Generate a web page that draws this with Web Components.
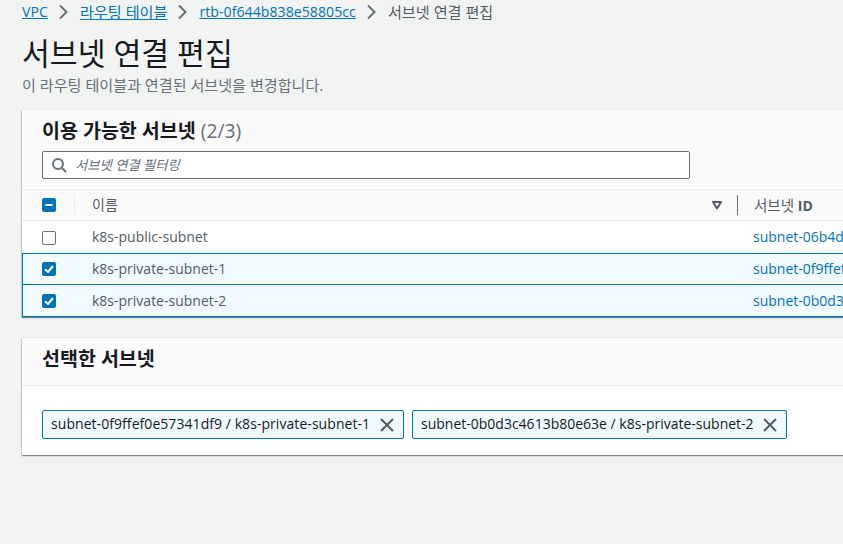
<!DOCTYPE html>
<html lang="ko"><head><meta charset="utf-8">
<style>
html,body{margin:0;padding:0;height:544px;width:843px;overflow:hidden;background:#f2f3f3;font-family:"Open Sans","Noto Sans CJK KR",sans-serif;font-size:14px;color:#16191f}
</style></head><body>
<edit-page></edit-page>
<script>
function def(name,css,html){
  customElements.define(name,class extends HTMLElement{
    constructor(){super();const r=this.attachShadow({mode:'open'});r.innerHTML=`<style>${css}</style>`+(typeof html==='function'?html(this):html);}
  });
}
const chev='<svg width="16" height="16" viewBox="0 0 16 16" fill="none" stroke="#687078" stroke-width="2"><path d="M4 1.5 10.5 8 4 14.5"/></svg>';
def('bread-crumbs',`:host{display:flex;align-items:center;height:23px;padding-left:22px;white-space:nowrap;font-size:14.2px;line-height:22px;color:#545b64}
a{color:#0073bb;text-decoration:underline}svg{margin:0 8px;display:block}.k{font-size:15.15px}`,
`<a>VPC</a>${chev}<a class="k">라우팅 테이블</a>${chev}<a>rtb-0f644b838e58805cc</a>${chev}<span class="k">서브넷 연결 편집</span>`);
def('page-head',`:host{display:block;padding:13px 22px 0 22px;height:87px;box-sizing:border-box}
h1{margin:0;font-size:30.3px;line-height:36px;font-weight:400;color:#16191f}
p{margin:4px 0 0;font-size:15.1px;line-height:18px;color:#687078}`,
`<h1>서브넷 연결 편집</h1><p>이 라우팅 테이블과 연결된 서브넷을 변경합니다.</p>`);
def('aws-card',`:host{display:block;background:#fff;width:1100px;margin-left:22px;box-shadow:0 1px 1px 0 rgba(0,28,36,.3),1px 1px 1px 0 rgba(0,28,36,.15),-1px 1px 1px 0 rgba(0,28,36,.15),0 -1px 1px 0 rgba(0,28,36,.04)}`,`<slot></slot>`);
def('check-box',`:host{display:block;width:14px;height:14px;box-sizing:border-box;border-radius:2px;border:1px solid #687078;background:#fff}
:host([on]),:host([mixed]){background:#0073bb;border-color:#0073bb}
svg{display:block;width:12px;height:12px}`,
el=>el.hasAttribute('on')?'<svg viewBox="0 0 12 12" fill="none" stroke="#fff" stroke-width="2"><path d="M2 6.2 5 9 10 3"/></svg>':el.hasAttribute('mixed')?'<svg viewBox="0 0 12 12" fill="none" stroke="#fff" stroke-width="2"><path d="M2.5 6h7"/></svg>':'');
def('search-box',`:host{display:flex;align-items:center;box-sizing:border-box;width:648px;height:28px;border:1px solid #687078;border-radius:2px;background:#fff;margin-top:6px;padding-left:8px;font-size:13.3px;font-style:italic;color:#687078}
svg{margin-right:8px;display:block}span{padding-bottom:2px}`,
`<svg width="16" height="16" viewBox="0 0 16 16" fill="none" stroke="#687078" stroke-width="2"><circle cx="7" cy="7" r="5"/><path d="M11 11l4 4"/></svg><span><slot></slot></span>`);
def('table-row',`:host{display:flex;align-items:center;box-sizing:border-box;height:32px;background:#fff;position:relative;color:#545b64;white-space:nowrap;padding-top:2px}
:host([selected]){background:#f1faff;border-bottom:1px solid #0073bb;border-left:1px solid #0073bb;padding-top:0}
:host([first]){border-top:1px solid #0073bb}
:host([last]){padding-top:1px}
.c{width:53px;padding-left:20px;box-sizing:border-box;flex:none}
:host([selected]) .c{width:52px;padding-left:19px}
.n{width:678px;flex:none;padding:0 0 3px 17px;box-sizing:border-box}
.i{color:#0073bb;padding-bottom:3px}
:host([selected]) .n,:host([selected]) .i{padding-bottom:1px}`,
el=>`<div class="c"><check-box ${el.hasAttribute('selected')?'on':''}></check-box></div><div class="n">${el.getAttribute('name')}</div><div class="i">${el.getAttribute('sid')}</div>`);
def('table-head',`:host{display:flex;align-items:center;box-sizing:border-box;height:32px;background:#fafafa;border-top:1px solid #eaeded;border-bottom:1px solid #eaeded;color:#545b64;font-size:14px}
.c{width:53px;height:20px;padding-left:20px;box-sizing:border-box;flex:none;border-right:1px solid #eaeded;display:flex;align-items:center}
.n{width:662px;flex:none;padding-left:17px;padding-right:14px;box-sizing:border-box;display:flex;align-items:center;justify-content:space-between}
.n span{padding-bottom:2px}
.d{width:1px;height:20px;background:#687078;margin-right:16px;flex:none}
b{font-weight:400;font-size:14.5px;white-space:nowrap;padding-bottom:2px}b span{font-weight:700;font-size:14px}svg{display:block}`,
`<div class="c"><check-box mixed></check-box></div><div class="n"><span>이름</span><svg width="12" height="12" viewBox="0 0 12 12" fill="none" stroke="#545b64" stroke-width="2"><path d="M2 3h8L6 9.5z" stroke-linejoin="round"/></svg></div><div class="d"></div><b>서브넷 <span>ID</span></b>`);
def('token-chip',`:host{display:flex;align-items:center;justify-content:space-between;box-sizing:border-box;height:29px;border:1px solid #0073bb;border-radius:2px;background:#f1faff;padding:0 8px;color:#16191f;white-space:nowrap;font-size:14px;flex:none}
span{padding-bottom:2px}svg{display:block}`,
`<span><slot></slot></span><svg width="16" height="16" viewBox="0 0 16 16" fill="none" stroke="#545b64" stroke-width="2"><path d="M2 2l12 12M14 2 2 14"/></svg>`);
def('edit-page',`:host{display:block}
.h{background:#fafafa;padding:7px 20px 0;height:79px;box-sizing:border-box}
h2{margin:0;font-size:19.5px;line-height:28px;font-weight:700;color:#16191f}
h2 span{font-weight:400;color:#687078;font-size:19.3px}
.h2{background:#fafafa;padding:7px 20px 0;height:48px;box-sizing:border-box;border-bottom:1px solid #eaeded}
.b{padding:24px 20px 0;height:69px;box-sizing:border-box;display:flex;gap:8px}
.gap{height:21px}`,
`<bread-crumbs></bread-crumbs><page-head></page-head>
<aws-card>
 <div class="h"><h2>이용 가능한 서브넷 <span>(2/3)</span></h2><search-box>서브넷 연결 필터링</search-box></div>
 <table-head></table-head>
 <table-row name="k8s-public-subnet" sid="subnet-06b4d"></table-row>
 <table-row selected first name="k8s-private-subnet-1" sid="subnet-0f9ffef0e57341df9"></table-row>
 <table-row selected last name="k8s-private-subnet-2" sid="subnet-0b0d3c4613b80e63e"></table-row>
</aws-card>
<div class="gap"></div>
<aws-card>
 <div class="h2"><h2>선택한 서브넷</h2></div>
 <div class="b"><token-chip style="width:362px;letter-spacing:.06px">subnet-0f9ffef0e57341df9 / k8s-private-subnet-1</token-chip><token-chip style="width:375px">subnet-0b0d3c4613b80e63e / k8s-private-subnet-2</token-chip></div>
</aws-card>`);
</script>
</body></html>
